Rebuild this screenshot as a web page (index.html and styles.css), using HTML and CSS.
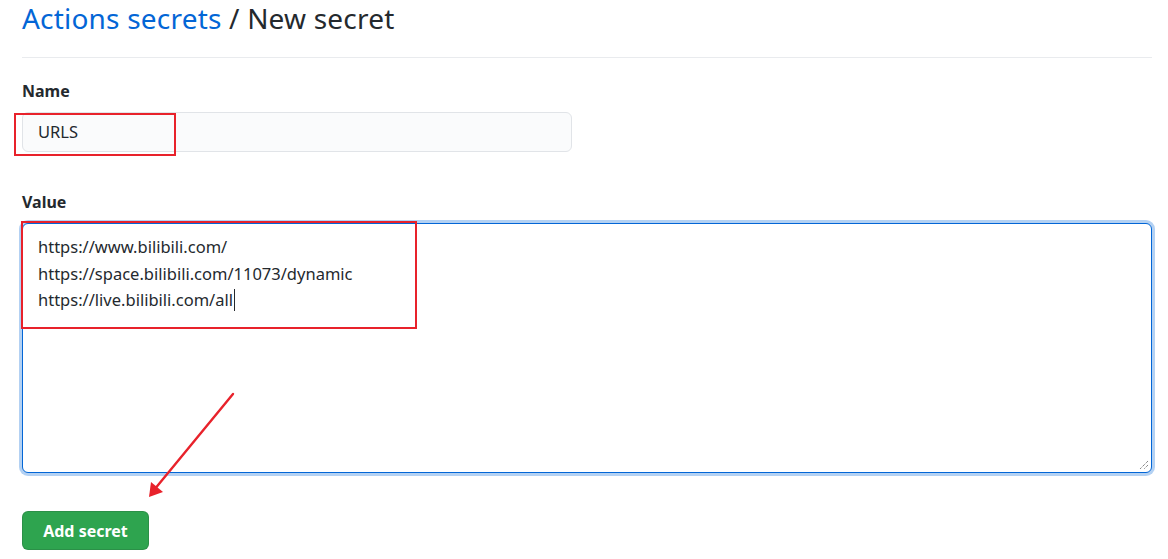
FILE: index.html
```html
<!DOCTYPE html>
<html lang="en">
<head>
<meta charset="utf-8">
<title>New secret</title>
<link rel="stylesheet" href="styles.css">
</head>
<body>
<div class="page">
  <div class="subhead">
    <h1 class="subhead-heading"><a class="crumb" href="#">Actions secrets</a> / New secret</h1>
  </div>
  <form class="secret-form">
    <div class="form-group">
      <label class="label">Name</label>
      <div class="field name-field">
        <div class="input">URLS</div>
        <div class="mark mark-name"></div>
      </div>
    </div>
    <div class="form-group value-group">
      <label class="label">Value</label>
      <div class="field">
        <div class="textarea">
          <div class="line">https://www.bilibili.com/</div>
          <div class="line">https://space.bilibili.com/11073/dynamic</div>
          <div class="line">https://live.bilibili.com/all<span class="caret"></span></div>
          <svg class="resize" width="10" height="10" viewBox="0 0 10 10"><path d="M9 1 L1 9 M9 5 L5 9" stroke="#555" stroke-width="1" stroke-dasharray="1 1"/></svg>
        </div>
        <div class="mark mark-value"></div>
      </div>
    </div>
    <button class="btn-primary" type="button">Add secret</button>
  </form>
</div>
<svg class="arrow" width="1168" height="559" viewBox="0 0 1168 559">
  <line x1="233" y1="394" x2="154" y2="490" stroke="#e8222b" stroke-width="2.4" stroke-linecap="round"/>
  <path d="M149 497 L151 482 L163 492 Z" fill="#e8222b"/>
</svg>
</body>
</html>
```
FILE: styles.css
```css
html, body {
  margin: 0;
  padding: 0;
  background: #ffffff;
}
body {
  font-family: "Noto Sans", "Open Sans", sans-serif;
  color: #24292e;
  position: relative;
  width: 1168px;
  height: 559px;
  overflow: hidden;
}
.page {
  padding: 0 16px 0 22px;
}
.subhead {
  border-bottom: 1px solid #e9ebee;
  height: 58px;
  box-sizing: border-box;
}
.subhead-heading {
  margin: 0;
  font-size: 28px;
  font-weight: 400;
  line-height: 36px;
  color: #24292e;
  padding-top: 0;
  letter-spacing: 0.2px;
}
.crumb {
  color: #0366d6;
  text-decoration: none;
}
.secret-form {
  display: flex;
  flex-direction: column;
  align-items: flex-start;
  padding-top: 21px;
}
.form-group {
  display: flex;
  flex-direction: column;
  align-items: stretch;
  width: 100%;
}
.label {
  font-size: 16px;
  font-weight: 700;
  line-height: 24px;
  height: 24px;
  margin-bottom: 9px;
}
.field {
  position: relative;
}
.input {
  width: 550px;
  height: 40px;
  box-sizing: border-box;
  background: #fafbfc;
  border: 1px solid #e1e4e8;
  border-radius: 6px;
  font-size: 16.5px;
  line-height: 38px;
  padding-left: 15px;
  color: #24292e;
}
.value-group {
  margin-top: 38px;
}
.textarea {
  position: relative;
  height: 250px;
  box-sizing: border-box;
  border: 1px solid #0366d6;
  border-radius: 6px;
  box-shadow: 0 0 0 3px rgba(3, 102, 214, 0.3);
  padding: 10px 15px;
  font-size: 16.5px;
  line-height: 26.5px;
  color: #24292e;
  background: #fff;
}
.caret {
  display: inline-block;
  width: 1px;
  height: 22px;
  background: #24292e;
  vertical-align: -5px;
  margin-left: 1px;
}
.resize {
  position: absolute;
  right: 2px;
  bottom: 2px;
}
.mark {
  position: absolute;
  border: 2px solid #e8222b;
  box-sizing: border-box;
  pointer-events: none;
}
.mark-name {
  left: -8px;
  top: 1px;
  width: 162px;
  height: 43px;
}
.mark-value {
  left: -1px;
  top: -2px;
  width: 396px;
  height: 108px;
}
.btn-primary {
  margin-top: 38px;
  width: 127px;
  height: 39px;
  background: #2ea44f;
  border: 1px solid rgba(27, 31, 35, 0.15);
  border-radius: 6px;
  color: #fff;
  font-family: inherit;
  font-size: 16px;
  font-weight: 700;
  padding: 0;
}
.arrow {
  position: absolute;
  left: 0;
  top: 0;
  pointer-events: none;
}
```
